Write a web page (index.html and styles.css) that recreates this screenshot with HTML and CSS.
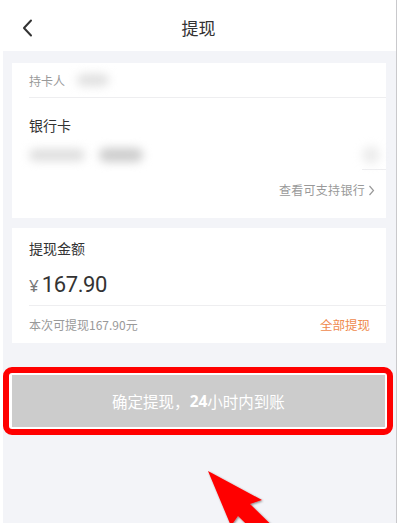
FILE: index.html
```html
<!DOCTYPE html>
<html lang="zh-CN">
<head>
<meta charset="utf-8">
<link rel="stylesheet" href="styles.css">
</head>
<body>
<div class="app">
  <header class="header">
    <svg class="back" width="14" height="18" viewBox="0 0 14 18"><polyline points="10,1.5 3,9 10,16.5" fill="none" stroke="#333" stroke-width="2" stroke-linecap="round" stroke-linejoin="round"/></svg>
    <div class="title">提现</div>
  </header>

  <section class="card card-bank">
    <div class="row holder">
      <span class="label-sm">持卡人</span>
      <span class="blur blur-name"></span>
    </div>
    <div class="bank-title">银行卡</div>
    <div class="row cardno">
      <span class="blur blur-a"></span>
      <span class="blur blur-b"></span>
      <span class="blur blur-c"></span>
    </div>
    <div class="divider-part"></div>
    <div class="row support">
      <span class="support-link">查看可支持银行</span>
      <svg width="7" height="11" viewBox="0 0 7 11"><polyline points="1.5,1 5.5,5.5 1.5,10" fill="none" stroke="#999" stroke-width="1.2"/></svg>
    </div>
  </section>

  <section class="card card-amount">
    <div class="amount-title">提现金额</div>
    <div class="amount"><span class="yen">¥</span><span class="num">167.90</span></div>
    <div class="row avail">
      <span class="avail-text">本次可提现167.90元</span>
      <span class="all">全部提现</span>
    </div>
  </section>

  <div class="highlight">
    <div class="btn">确定提现，<b>24</b>小时内到账</div>
  </div>

  <svg class="arrow" width="120" height="80" viewBox="0 0 120 80">
    <defs>
      <filter id="sh" x="-20%" y="-20%" width="140%" height="140%">
        <feDropShadow dx="1" dy="1" stdDeviation="1" flood-color="#000" flood-opacity="0.45"/>
      </filter>
    </defs>
    <polygon filter="url(#sh)" fill="#ff0000" points="8,5 62,34 50,38 94,81 82,93 38,50 31,60"/>
  </svg>
</div>
</body>
</html>
```

FILE: styles.css
```css
html, body {
  margin: 0;
  padding: 0;
  background: #ffffff;
}
body {
  font-family: "Noto Sans CJK SC", "Noto Sans", sans-serif;
  color: #333;
  overflow: hidden;
}
.app {
  position: relative;
  width: 393px;
  height: 523px;
  margin-left: 3px;
  background: #f3f4f8;
  border-right: 1px solid #c9c9cc;
  overflow: hidden;
}
.header {
  height: 51px;
  background: #fff;
  margin-left: -3px;
  width: 396px;
  display: flex;
  align-items: center;
  justify-content: center;
  position: relative;
}
.back {
  position: absolute;
  left: 21px;
  top: 19px;
}
.title {
  font-size: 17px;
  color: #333;
  line-height: 20px;
  margin-left: 1px;
  margin-top: 4px;
}
.card {
  background: #fff;
  margin-left: 9px;
  width: 374px;
}
.card-bank {
  margin-top: 12px;
  height: 155px;
  padding-left: 17px;
  box-sizing: border-box;
}
.row {
  display: flex;
  align-items: center;
}
.holder {
  height: 34px;
  border-bottom: 1px solid #eeeef0;
  gap: 12px;
}
.label-sm {
  font-size: 12px;
  color: #999;
}
.blur {
  display: block;
  border-radius: 8px;
  filter: blur(5px);
}
.blur-name {
  width: 32px;
  height: 12px;
  background: #e0e0e0;
}
.bank-title {
  font-size: 14px;
  color: #333;
  margin-top: 17px;
  line-height: 20px;
}
.cardno {
  height: 28px;
  margin-top: 6px;
  position: relative;
}
.blur-a {
  width: 56px;
  height: 12px;
  background: #dedede;
  margin-left: 0;
}
.blur-b {
  width: 44px;
  height: 14px;
  background: #cdcdcd;
  margin-left: 14px;
}
.blur-c {
  width: 18px;
  height: 18px;
  border-radius: 50%;
  background: #ececec;
  margin-left: auto;
  margin-right: 6px;
}
.divider-part {
  height: 1px;
  width: 24px;
  margin-left: auto;
  background: #eeeef0;
}
.support {
  justify-content: flex-end;
  gap: 3px;
  padding-right: 11px;
  margin-top: 12px;
}
.support-link {
  font-size: 12px;
  color: #999;
  line-height: 16px;
  letter-spacing: 0.3px;
}
.card-amount {
  margin-top: 10px;
  height: 115px;
  padding-left: 17px;
  box-sizing: border-box;
}
.amount-title {
  font-size: 14px;
  color: #333;
  line-height: 20px;
  padding-top: 10px;
}
.amount {
  display: flex;
  align-items: baseline;
  margin-top: 14px;
  height: 28px;
  border-bottom: 1px solid #eeeef0;
  padding-bottom: 5px;
}
.yen {
  font-size: 17px;
  color: #777;
  margin-right: 3px;
  font-family: "Noto Sans", sans-serif;
}
.num {
  font-size: 22px;
  color: #333;
  font-family: Roboto, sans-serif;
  letter-spacing: -0.4px;
}
.avail {
  justify-content: space-between;
  padding-right: 16px;
  height: 36px;
}
.avail-text {
  font-size: 12px;
  color: #999;
}
.all {
  font-size: 12.5px;
  color: #ef8a4d;
}
.highlight {
  margin-top: 24px;
  width: 390px;
  box-sizing: border-box;
  border: 6px solid #ff0000;
  border-radius: 9px;
  background: #fff;
  padding: 2px 2px 2px 3px;
}
.btn {
  height: 52px;
  background: #cccccc;
  color: #fff;
  font-size: 15.5px;
  display: flex;
  align-items: center;
  justify-content: center;
}
.btn b {
  font-weight: 700;
  font-family: "Noto Sans", sans-serif;
}
.arrow {
  position: absolute;
  left: 197px;
  top: 466px;
}
```
